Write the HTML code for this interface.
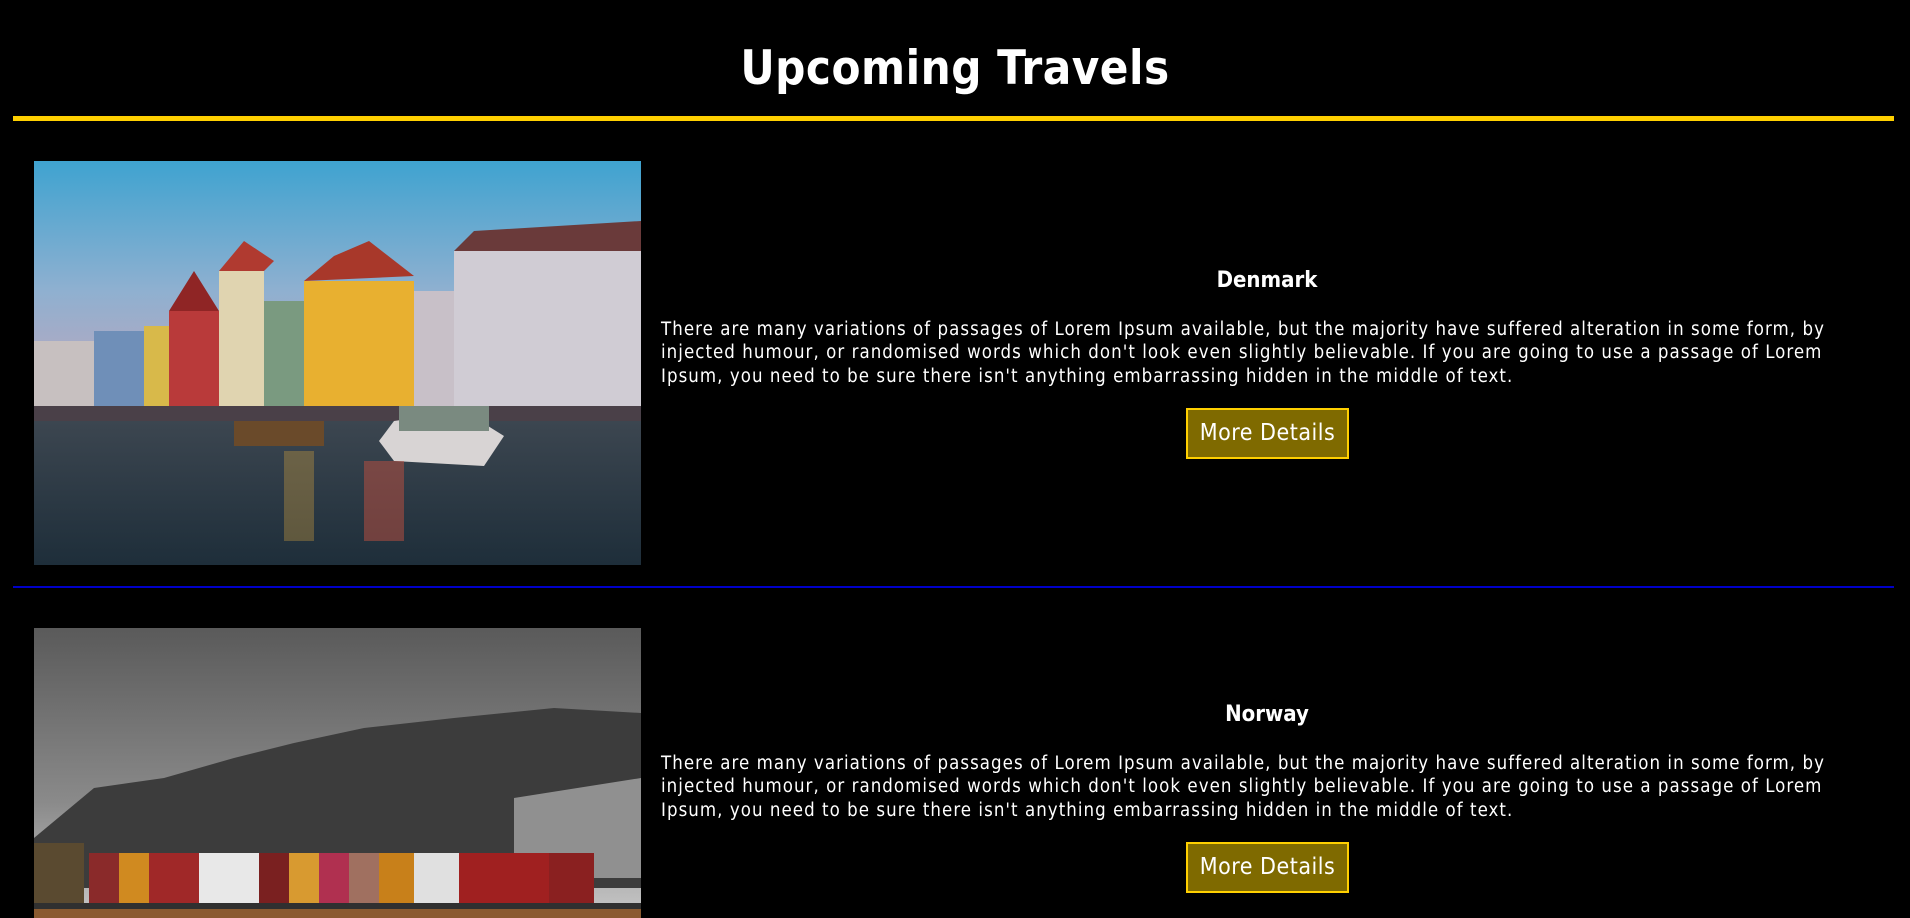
<!DOCTYPE html>
<html><head><meta charset="utf-8"><style>
html,body{margin:0;padding:0;background:#000;width:1910px;height:914px;overflow:hidden;font-family:"DejaVu Sans Condensed","Liberation Sans",sans-serif;color:#fff}
h1{position:absolute;left:0;width:1910px;top:34px;margin:0;text-align:center;font-size:47px;font-weight:bold;line-height:70px;letter-spacing:0.5px}
.yl{position:absolute;left:13px;width:1881px;top:116px;height:5px;background:#ffd000}
.bl{position:absolute;left:13px;width:1881px;top:586px;height:2px;background:#0000c8}
.img{position:absolute;left:34px;width:607px}
.col{position:absolute;left:661px;width:1212px;text-align:center}
.col h2{margin:0;font-size:22px;font-weight:bold;line-height:28px}
.col p{margin:0;text-align:left;font-size:18.5px;line-height:23.3px;letter-spacing:1.05px}
.btn{position:absolute;left:525px;width:159px;height:47px;border:2px solid #ffd000;background:#7f6a00;font-size:23px;line-height:47px;text-align:center;box-sizing:content-box;letter-spacing:0.5px}
</style></head><body>
<h1>Upcoming Travels</h1>
<div class="yl"></div>
<svg class="img" style="top:161px;height:404px" viewBox="0 0 607 404" preserveAspectRatio="none">
<defs><linearGradient id="sky" x1="0" y1="0" x2="0" y2="1"><stop offset="0" stop-color="#3fa3d0"/><stop offset="0.5" stop-color="#8fb0d0"/><stop offset="1" stop-color="#c9a4b8"/></linearGradient>
<linearGradient id="wa" x1="0" y1="0" x2="0" y2="1"><stop offset="0" stop-color="#3c4650"/><stop offset="1" stop-color="#1e2e3a"/></linearGradient></defs>
<rect width="607" height="260" fill="url(#sky)"/>
<rect x="0" y="180" width="100" height="80" fill="#c7c0c0"/>
<rect x="60" y="170" width="50" height="90" fill="#6f8fb8"/>
<rect x="110" y="165" width="25" height="95" fill="#d8b94a"/>
<rect x="135" y="150" width="50" height="110" fill="#b93a3a"/>
<polygon points="135,150 160,110 185,150" fill="#8f2525"/>
<rect x="185" y="110" width="45" height="150" fill="#e0d4b0"/>
<polygon points="185,110 210,80 240,100 230,110" fill="#b03a30"/>
<rect x="230" y="140" width="40" height="120" fill="#7a9a80"/>
<rect x="270" y="120" width="110" height="140" fill="#e8b030"/>
<polygon points="270,120 300,95 335,80 380,115" fill="#a8382a"/>
<rect x="380" y="130" width="40" height="130" fill="#c8c0c8"/>
<rect x="420" y="90" width="187" height="170" fill="#d0ccd4"/>
<polygon points="420,90 440,70 607,60 607,90" fill="#6a3a3a"/>
<rect x="0" y="245" width="607" height="25" fill="#4a4048"/>
<rect x="0" y="260" width="607" height="144" fill="url(#wa)"/>
<polygon points="360,260 430,250 470,275 450,305 360,300 345,280" fill="#d8d4d4"/>
<rect x="365" y="245" width="90" height="25" fill="#7a8a80"/>
<rect x="200" y="260" width="90" height="25" fill="#6a4a2a"/>
<rect x="330" y="300" width="40" height="80" fill="#c05040" opacity="0.5"/>
<rect x="250" y="290" width="30" height="90" fill="#d0a040" opacity="0.35"/>
</svg>
<div class="col" style="top:267px"><h2>Denmark</h2>
<p style="margin-top:23px">There are many variations of passages of Lorem Ipsum available, but the majority have suffered alteration in some form, by injected humour, or randomised words which don't look even slightly believable. If you are going to use a passage of Lorem Ipsum, you need to be sure there isn't anything embarrassing hidden in the middle of text.</p>
<div class="btn" style="top:141px">More Details</div></div>
<div class="bl"></div>
<svg class="img" style="top:628px;height:290px" viewBox="0 0 607 290" preserveAspectRatio="none">
<defs><linearGradient id="sk2" x1="0" y1="0" x2="0" y2="1"><stop offset="0" stop-color="#5a5a5a"/><stop offset="0.6" stop-color="#8a8a8a"/><stop offset="1" stop-color="#c8c8c8"/></linearGradient></defs>
<rect width="607" height="290" fill="url(#sk2)"/>
<polygon points="0,210 60,160 130,150 200,130 260,115 330,100 420,90 520,80 607,85 607,260 0,260" fill="#3c3c3c"/>
<polygon points="480,170 607,150 607,250 480,250" fill="#c8c8c8" opacity="0.6"/>
<rect x="0" y="215" width="50" height="60" fill="#5a4a30"/>
<rect x="55" y="225" width="30" height="50" fill="#8a2a2a"/><rect x="85" y="225" width="30" height="50" fill="#d08a20"/>
<rect x="115" y="225" width="50" height="50" fill="#a02828"/><rect x="165" y="225" width="60" height="50" fill="#e8e8e8"/>
<rect x="225" y="225" width="30" height="50" fill="#7a2020"/><rect x="255" y="225" width="30" height="50" fill="#d89a30"/>
<rect x="285" y="225" width="30" height="50" fill="#b03050"/><rect x="315" y="225" width="30" height="50" fill="#a07060"/>
<rect x="345" y="225" width="35" height="50" fill="#c8801a"/><rect x="380" y="225" width="45" height="50" fill="#e0e0e0"/>
<rect x="425" y="225" width="90" height="50" fill="#a02020"/><rect x="515" y="225" width="45" height="50" fill="#8a2020"/>
<rect x="0" y="275" width="607" height="6" fill="#303030"/>
<rect x="0" y="281" width="607" height="9" fill="#8a5a30"/>
</svg>
<div class="col" style="top:701px"><h2>Norway</h2>
<p style="margin-top:23px">There are many variations of passages of Lorem Ipsum available, but the majority have suffered alteration in some form, by injected humour, or randomised words which don't look even slightly believable. If you are going to use a passage of Lorem Ipsum, you need to be sure there isn't anything embarrassing hidden in the middle of text.</p>
<div class="btn" style="top:141px">More Details</div></div>
</body></html>
